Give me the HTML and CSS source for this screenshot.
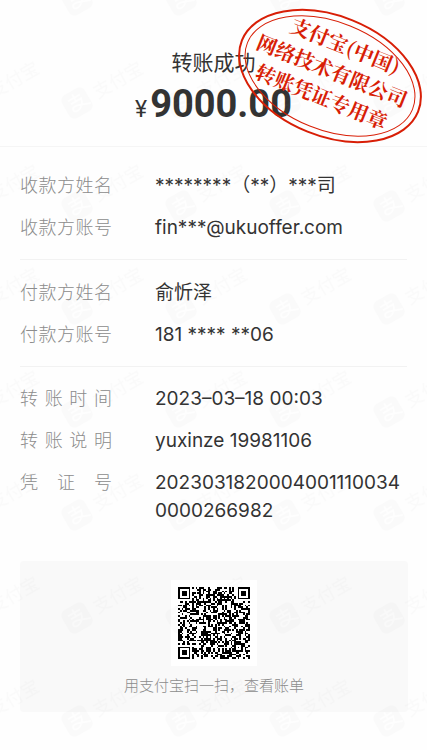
FILE: index.html
```html
<!DOCTYPE html>
<html lang="zh-CN">
  <head>
    <meta charset="utf-8">
    <meta name="viewport" content="width=device-width, initial-scale=1">
    <title>转账成功</title>
    <link rel="stylesheet" href="styles.css">
  </head>
  <body>
    <div class="receipt">
      <header class="header">
        <h1 class="title">转账成功</h1>
        <p class="amount"><span class="currency">¥</span>9000.00</p>
      </header>

      <dl class="section payee">
        <div class="row">
          <dt>收款方姓名</dt>
          <dd>********（**）***司</dd>
        </div>
        <div class="row">
          <dt>收款方账号</dt>
          <dd>fin***@ukuoffer.com</dd>
        </div>
      </dl>

      <dl class="section payer">
        <div class="row">
          <dt>付款方姓名</dt>
          <dd>俞忻泽</dd>
        </div>
        <div class="row">
          <dt>付款方账号</dt>
          <dd>181 **** **06</dd>
        </div>
      </dl>

      <dl class="section detail">
        <div class="row">
          <dt>转 账 时 间</dt>
          <dd>2023–03–18 00:03</dd>
        </div>
        <div class="row">
          <dt>转 账 说 明</dt>
          <dd>yuxinze 19981106</dd>
        </div>
        <div class="row">
          <dt>凭 证 号</dt>
          <dd>20230318200040011100340000266982</dd>
        </div>
      </dl>

      <div class="scan">
        <svg class="qr" id="qr" viewBox="-4 -4 49 49" shape-rendering="crispEdges"></svg>
        <p class="tip">用支付宝扫一扫，查看账单</p>
      </div>

      <svg class="watermark" aria-hidden="true">
        <defs>
          <pattern id="mark" width="104" height="103" patternUnits="userSpaceOnUse" x="56" y="50">
            <g transform="translate(21 53) rotate(-30)">
              <rect x="-13" y="-13" width="26" height="26" rx="6" />
              <path class="mark-line" d="M-7 -6h14M0 -10v8M-6 -2h12c-1 5-5 9-9 9-5 0-5-5 0-5 4 0 9 3 15 5" />
              <text x="20" y="7">支付宝</text>
            </g>
          </pattern>
        </defs>
        <rect width="100%" height="100%" fill="url(#mark)" />
      </svg>

      <!-- company seal -->
      <svg class="stamp" viewBox="-95 -70 190 140">
        <g transform="rotate(22)">
          <ellipse rx="95" ry="60" stroke-width="2" />
          <ellipse rx="89" ry="54" stroke-width="1" />
          <text x="3" y="-26">支付宝(中国)</text>
          <text x="0" y="2">网络技术有限公司</text>
          <text x="0" y="30">转账凭证专用章</text>
        </g>
      </svg>
    </div>

    <script>
      var size = 41;
      var seed = 20230318;
      var path = "";

      function random() {
        seed = (seed * 1103515245 + 12345) % 2147483648;
        return seed / 2147483648;
      }

      // square rings: finder has radius 3, alignment has radius 2
      function ring(x, y, cx, cy, radius) {
        var d = Math.max(Math.abs(x - cx), Math.abs(y - cy));
        if (d > radius + (radius == 3 ? 1 : 0)) return null;
        if (radius == 3) return d != 2 && d != 4;
        return d != 1;
      }

      for (var y = 0; y < size; y++) {
        for (var x = 0; x < size; x++) {
          var dark = random() < 0.5;
          var marks = [
            ring(x, y, 3, 3, 3),
            ring(x, y, size - 4, 3, 3),
            ring(x, y, 3, size - 4, 3),
            ring(x, y, size - 7, size - 7, 2)
          ];
          if (x == 6) dark = y % 2 == 0;
          if (y == 6) dark = x % 2 == 0;
          marks.forEach(function (m) {
            if (m !== null) dark = m;
          });
          if (dark) path += "M" + x + " " + y + "h1v1h-1z";
        }
      }
      document.getElementById("qr").innerHTML = '<path d="' + path + '"/>';
    </script>
  </body>
</html>
```
FILE: styles.css
```css
* {
  box-sizing: border-box;
}
body {
  margin: 0;
  background-color: #fefefe;
  color: #333;
  font-family: Inter, "Noto Sans CJK SC", sans-serif;
}
h1,
p,
dl,
dd {
  margin: 0;
}
.receipt {
  position: relative;
  min-height: 100vh;
  padding-bottom: 30px;
}
.header {
  padding: 48px 20px 16px;
  border-bottom: 1px solid #f5f5f5;
  text-align: center;
}
.title {
  font-size: 21px;
  line-height: 30px;
  font-weight: 400;
}
.amount {
  font-family: Roboto, sans-serif;
  font-size: 38px;
  line-height: 52px;
  font-weight: 700;
}
.currency {
  margin-right: 3px;
  font-size: 23px;
  line-height: 1;
  font-weight: 400;
}
.section {
  display: flex;
  flex-direction: column;
  gap: 14px;
  margin: 0 20px;
  padding: 19px 0 17px;
}
.payee {
  padding-top: 25px;
}
.payer {
  border-top: 1px solid #f2f2f2;
}
.detail {
  padding-top: 18px;
  border-top: 1px solid #f2f2f2;
}
.row {
  display: flex;
  gap: 43px;
  line-height: 28px;
}
.row dt {
  flex: none;
  width: 92px;
  color: #8c8c8c;
  font-size: 18px;
  font-weight: 300;
  text-align-last: justify;
}
.row dd {
  flex: 1;
  font-size: 19px;
  word-break: break-all;
}
.scan {
  display: flex;
  flex-direction: column;
  align-items: center;
  gap: 8px;
  margin: 19px 19px 0 20px;
  padding: 19px 0 14px;
  border-radius: 4px;
  background-color: #f9f9f9;
}
.qr {
  width: 86px;
  height: 86px;
  background-color: #fff;
}
.tip {
  color: #8c8c8c;
  font-size: 15px;
  line-height: 24px;
  font-weight: 300;
}
.watermark {
  position: absolute;
  top: 0;
  left: 0;
  width: 100%;
  height: 100%;
  opacity: 0.013;
  pointer-events: none;
}
.watermark text {
  font-size: 18px;
}
.mark-line {
  fill: none;
  stroke: #fff;
  stroke-width: 2;
}
.stamp {
  position: absolute;
  top: 6px;
  right: 2px;
  width: 190px;
  height: 140px;
  overflow: visible;
}
.stamp ellipse {
  fill: none;
  stroke: #d81e06;
}
.stamp text {
  fill: #d81e06;
  font-family: "Noto Serif CJK SC", "Noto Sans CJK SC", serif;
  font-size: 20px;
  font-weight: 700;
  text-anchor: middle;
}
```
